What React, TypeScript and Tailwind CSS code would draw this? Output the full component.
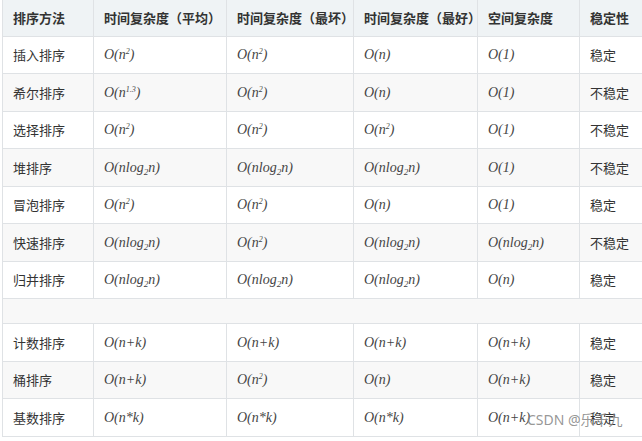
import React from "react";

const rows: string[][] = [
  ["插入排序", "O(n^2)", "O(n^2)", "O(n)", "O(1)", "稳定"],
  ["希尔排序", "O(n^1.3)", "O(n^2)", "O(n)", "O(1)", "不稳定"],
  ["选择排序", "O(n^2)", "O(n^2)", "O(n^2)", "O(1)", "不稳定"],
  ["堆排序", "O(nlog_2n)", "O(nlog_2n)", "O(nlog_2n)", "O(1)", "不稳定"],
  ["冒泡排序", "O(n^2)", "O(n^2)", "O(n)", "O(1)", "稳定"],
  ["快速排序", "O(nlog_2n)", "O(n^2)", "O(nlog_2n)", "O(nlog_2n)", "不稳定"],
  ["归并排序", "O(nlog_2n)", "O(nlog_2n)", "O(nlog_2n)", "O(n)", "稳定"],
];

const rows2: string[][] = [
  ["计数排序", "O(n+k)", "O(n+k)", "O(n+k)", "O(n+k)", "稳定"],
  ["桶排序", "O(n+k)", "O(n^2)", "O(n)", "O(n+k)", "稳定"],
  ["基数排序", "O(n*k)", "O(n*k)", "O(n*k)", "O(n+k)", "稳定"],
];

const head = ["排序方法", "时间复杂度（平均）", "时间复杂度（最坏）", "时间复杂度（最好）", "空间复杂度", "稳定性"];
const widths = ["w-[91px]", "w-[133px]", "w-[127px]", "w-[124px]", "w-[102px]", "w-[90px]"];

function Math({ s }: { s: string }) {
  // ^x = superscript up to ')', _x = one-char subscript
  const sup = s.match(/^(.*)\^([^)]+)(\).*)$/);
  if (sup) {
    return (
      <span>
        {sup[1]}
        <sup className="relative -top-[5px] text-[8px]">{sup[2]}</sup>
        {sup[3]}
      </span>
    );
  }
  const sub = s.match(/^(.*)_(.)(.*)$/);
  if (sub) {
    return (
      <span>
        {sub[1]}
        <sub className="relative top-[3px] text-[9px]">{sub[2]}</sub>
        {sub[3]}
      </span>
    );
  }
  return <span>{s}</span>;
}

const tdCls = "border border-[#dfe2e5] pl-[10px] pr-[4px] align-middle whitespace-nowrap";
const cjk = "font-['Noto_Sans_CJK_SC','Noto_Sans',sans-serif] text-[13px]";
const math = "font-['Liberation_Serif',serif] italic text-[14px] text-[#444]";

function Row({ r, i }: { r: string[]; i: number }) {
  return (
    <tr className={`h-[37.5px] ${i % 2 === 1 ? "bg-[#f8f8f8]" : "bg-white"}`}>
      {r.map((c, j) => (
        <td key={j} className={`${tdCls} ${j === 0 || j === 5 ? cjk : math} ${j === 5 ? "border-r-0" : ""}`}>
          {j === 0 || j === 5 ? c : <Math s={c} />}
        </td>
      ))}
    </tr>
  );
}

export default function App() {
  return (
    <div className="relative h-[441px] w-[642px] overflow-hidden bg-white text-[#333]">
      <table className="ml-[2px] w-[667px] table-fixed border-collapse">
        <colgroup>
          {widths.map((w, i) => (
            <col key={i} className={w} />
          ))}
        </colgroup>
        <thead>
          <tr className="h-[36px] bg-[#eff3f5]">
            {head.map((h, i) => (
              <th
                key={i}
                className={`${tdCls} ${cjk} border-t-0 text-left font-semibold text-[#333] ${i === 5 ? "border-r-0" : ""}`}
              >
                {h}
              </th>
            ))}
          </tr>
        </thead>
        <tbody>
          {rows.map((r, i) => (
            <Row key={i} r={r} i={i} />
          ))}
          <tr className="h-[25px] bg-[#f8f8f8]">
            <td colSpan={6} className={`${tdCls} border-r-0`} />
          </tr>
          {rows2.map((r, i) => (
            <Row key={i} r={r} i={i} />
          ))}
        </tbody>
      </table>
      <div className="absolute left-[527px] top-[409px] font-['Noto_Sans','Noto_Sans_CJK_SC',sans-serif] text-[14px] text-[#8a8a8a]/90">
        CSDN @乐千九
      </div>
    </div>
  );
}
